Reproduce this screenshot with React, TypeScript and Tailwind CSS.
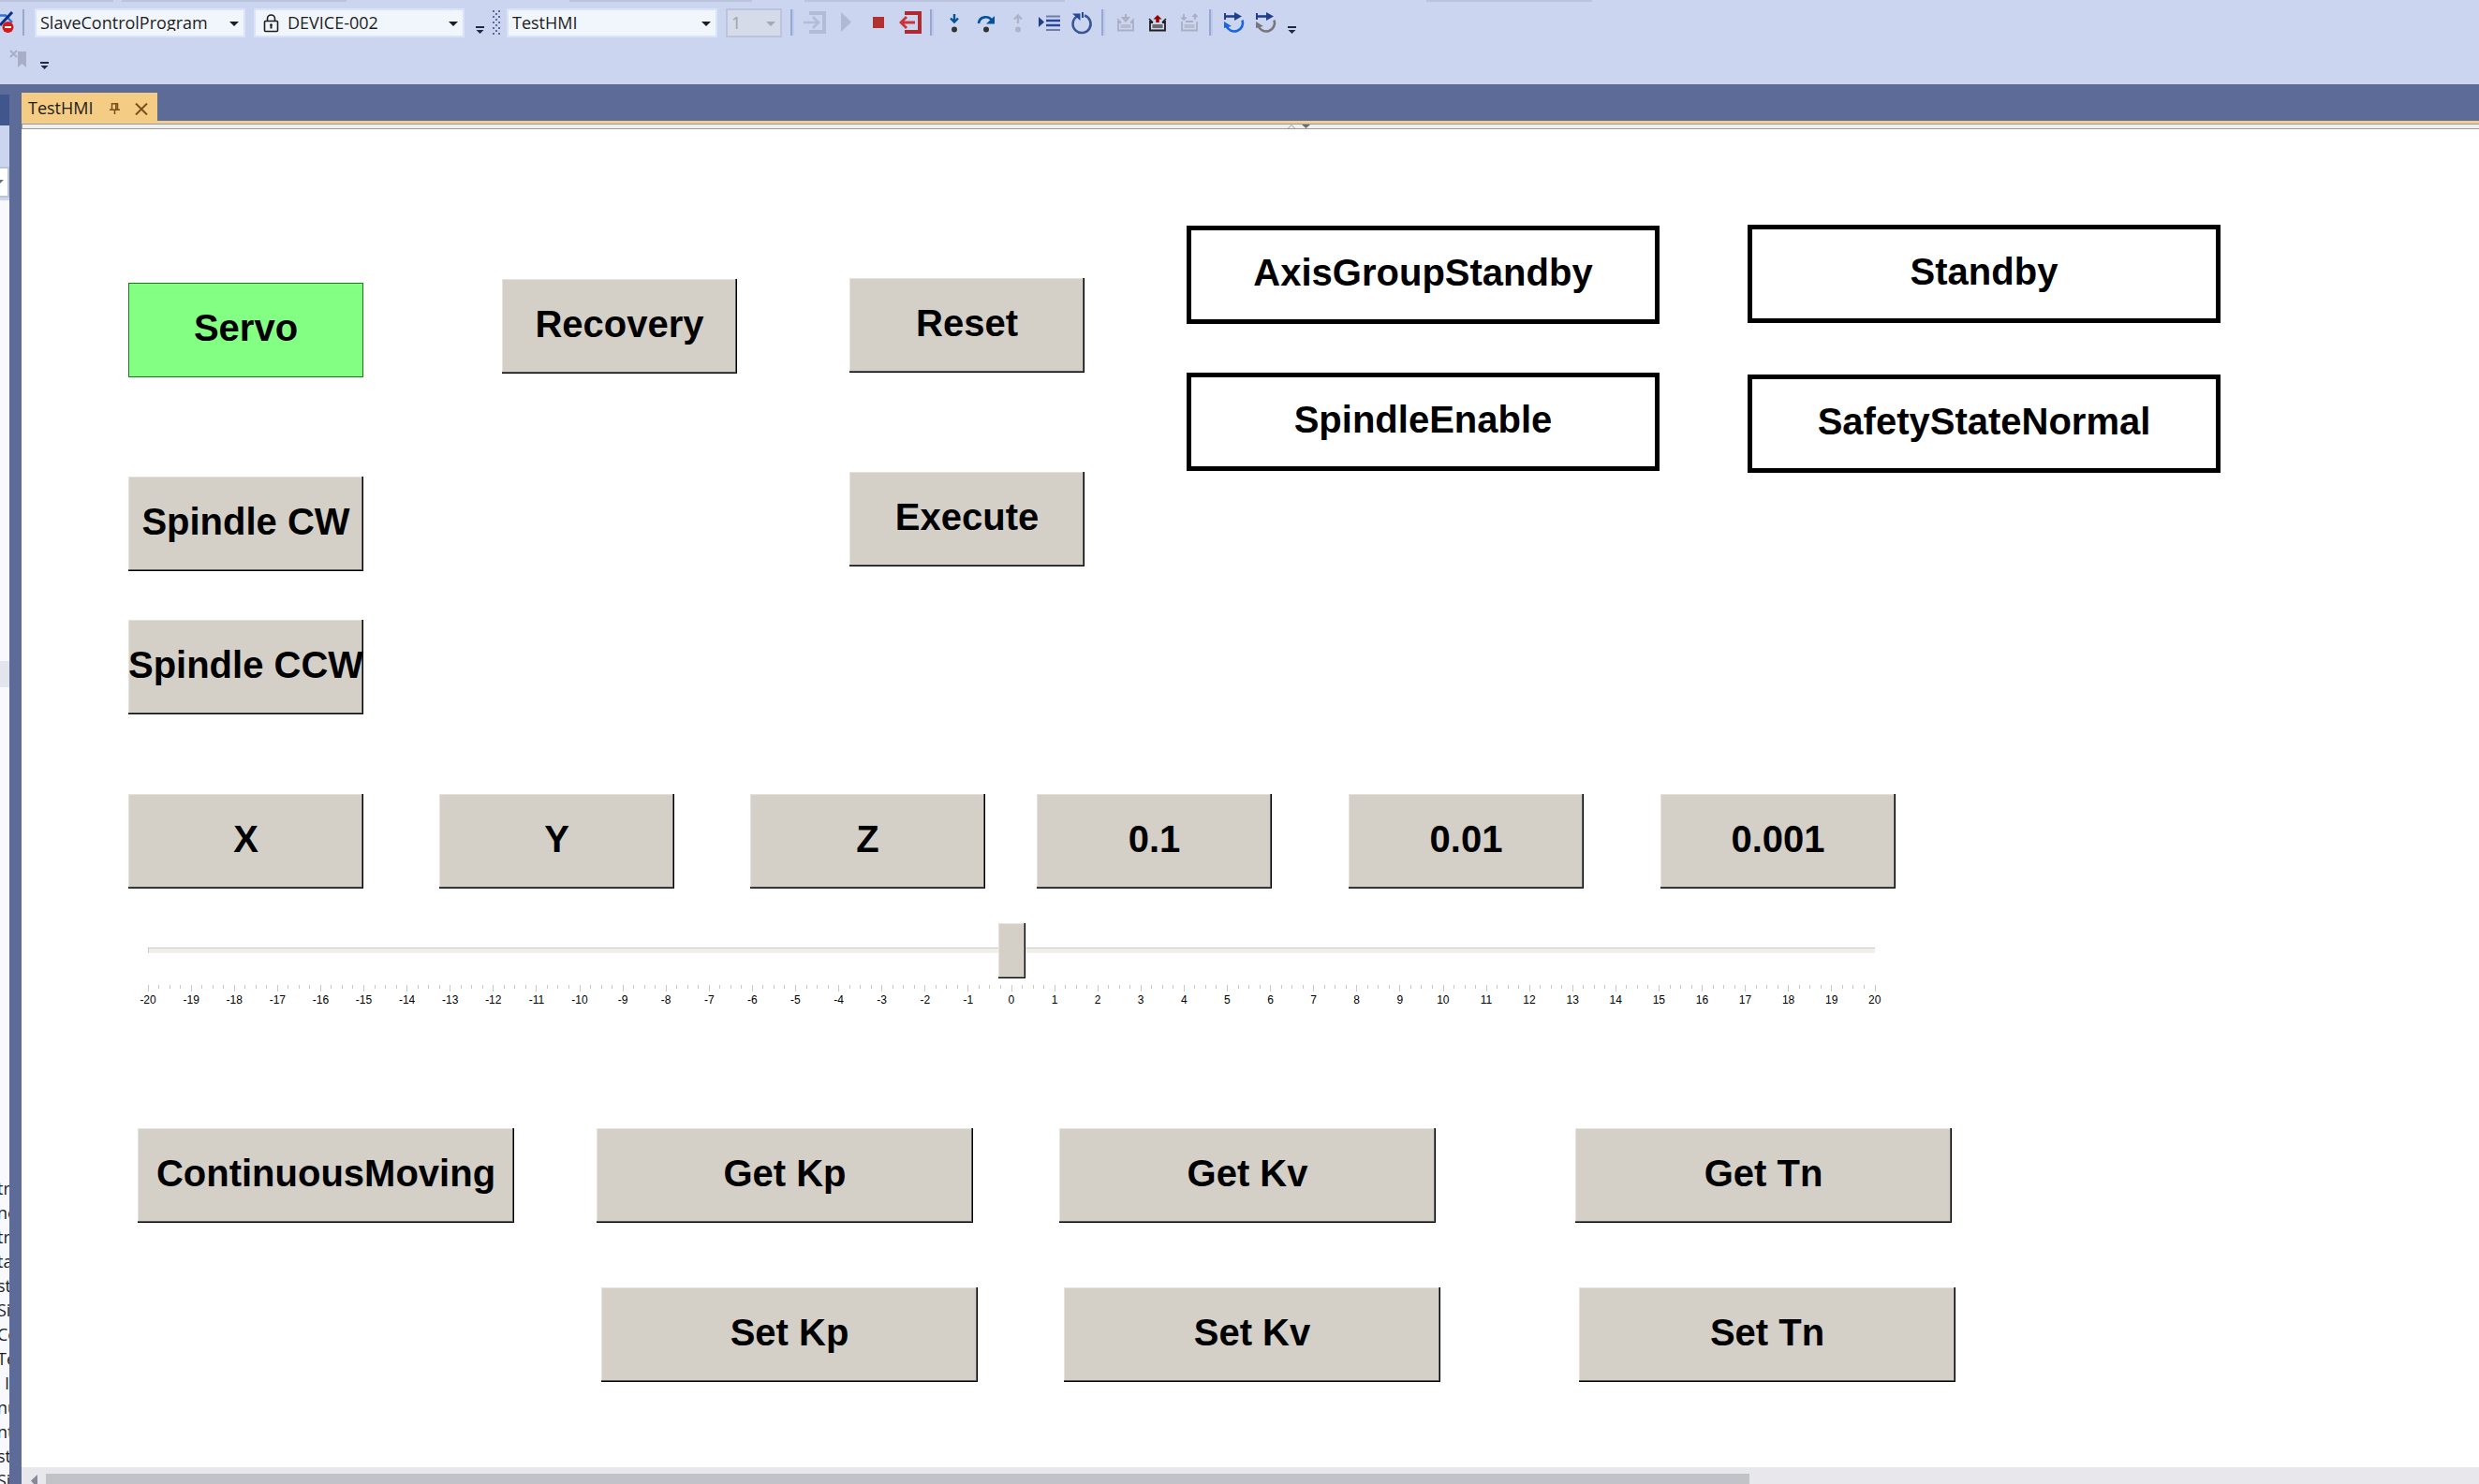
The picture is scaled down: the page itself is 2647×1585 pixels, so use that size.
import React, { useState } from "react";

const BEVEL =
  "bg-[#d4d0c8] shadow-[inset_-1px_-1px_#000,inset_-2px_-2px_#605d56,inset_1px_1px_#e6e3de]";

function HmiButton({ label, wide = false, on = false }: { label: string; wide?: boolean; on?: boolean }) {
  return (
    <button
      type="button"
      className={`flex h-[101px] shrink-0 items-center justify-center whitespace-nowrap pb-1.5 text-[40px] font-bold leading-none text-black ${
        wide ? "w-[402px]" : "w-[251px]"
      } ${on ? "border border-[#1c7a1c] bg-[#83ff83]" : BEVEL}`}
    >
      {label}
    </button>
  );
}

function Indicator({ label }: { label: string }) {
  return (
    <output className="flex h-[105px] w-[505px] shrink-0 items-center justify-center border-[5px] border-black bg-white pb-1.5 text-[40px] font-bold leading-none text-black">
      {label}
    </output>
  );
}

function Combo({ label, value, lock = false }: { label: string; value: string; lock?: boolean }) {
  return (
    <div className="relative flex h-[31px] w-[225px] shrink-0 items-center border-2 border-[#d9e3fb] bg-[#f1f5fc]">
      {lock && (
        <svg className="pointer-events-none absolute left-2 top-1" width="17" height="20" viewBox="0 0 17 20" fill="none" stroke="#1e1e1e" strokeWidth="1.6">
          <rect x="1.5" y="7.5" width="14" height="11" rx="1" />
          <path d="M4.5 7.5V5a4 4 0 0 1 8 0v2.5" />
          <path d="M8.5 11v4.5" strokeWidth="2" />
          <circle cx="8.5" cy="11.5" r="1.2" fill="#1e1e1e" stroke="none" />
        </svg>
      )}
      <select
        aria-label={label}
        className={`h-full w-full appearance-none bg-transparent text-[18px] leading-none text-[#1e1e1e] outline-none ${lock ? "pl-[34px]" : "pl-1"}`}
      >
        <option>{value}</option>
      </select>
      <svg className="pointer-events-none absolute right-[5px] top-[12px]" width="10" height="5" viewBox="0 0 10 5">
        <path d="M0 0h10L5 5z" fill="#1e1e1e" />
      </svg>
    </div>
  );
}

function Separator() {
  return <div className="ml-1 mr-[5px] h-7 w-1 shrink-0 border-l-2 border-[#98a7d0] bg-[#bccaee]" />;
}

function Overflow() {
  return (
    <button type="button" aria-label="Toolbar options" className="h-2 w-[9px] shrink-0">
      <svg width="9" height="8" viewBox="0 0 9 8" fill="#1b2a4a">
        <path d="M0 0h9v2H0zM0.5 4h8L4.5 8z" />
      </svg>
    </button>
  );
}

function Tool({ name, disabled = false, children }: { name: string; disabled?: boolean; children: React.ReactNode }) {
  return (
    <button type="button" aria-label={name} disabled={disabled} className="size-[34px] shrink-0">
      <svg width="34" height="34" viewBox="0 0 34 34" fill="none">
        {children}
      </svg>
    </button>
  );
}

function Tray({ color, fill }: { color: string; fill: string }) {
  return (
    <>
      <path d="M9 15v10.500h16V15M9 17h3M22 17h3" stroke={color} strokeWidth="1.8" />
      <path d="M8 13l4 4M26 13l-4 4" stroke={color} strokeWidth="1.5" />
      <rect x="11.5" y="19" width="11" height="4" fill={fill} />
    </>
  );
}

function CycleIcon({ arc }: { arc: string }) {
  return (
    <>
      <path d="M8 7v7" stroke="#1f3f8a" strokeWidth="2" />
      <path d="M8 10.500h12" stroke="#1f3f8a" strokeWidth="2.6" />
      <path d="M18 6l8 4.500-8 4.500z" fill="#1f3f8a" />
      <path d="M26.500 14.500a9 9 0 1 1-17 6" stroke={arc} strokeWidth="2.6" />
      <path d="M7 23V16l8 5z" fill={arc} />
    </>
  );
}

function Toolbars() {
  return (
    <header className="flex h-[90px] shrink-0 flex-col bg-[#ccd5f0]">
      <div className="flex h-0.5 shrink-0 overflow-hidden">
        <div className="w-[121px] shrink-0 bg-[#bac4dc]" />
        <div className="ml-[9px] w-[240px] shrink-0 bg-[#bac4dc]" />
        <div className="ml-[238px] w-[195px] shrink-0 bg-[#bac4dc]" />
        <div className="ml-[56px] w-[278px] shrink-0 bg-[#bac4dc]" />
        <div className="ml-[386px] w-[177px] shrink-0 bg-[#bac4dc]" />
      </div>
      <div className="mt-[5px] flex h-[34px] shrink-0 items-center">
        <svg width="15" height="34" viewBox="0 0 15 34" fill="none" className="shrink-0">
          <path d="M0 9.500h6L13 17" stroke="#2f6fd8" strokeWidth="2.5" />
          <path d="M0 20L13 6" stroke="#0b2e8a" strokeWidth="3" />
          <circle cx="8.5" cy="22" r="6" fill="#d11a1a" />
          <path d="M5 22h7" stroke="#fff" strokeWidth="2" />
        </svg>
        <div className="ml-[9px] mr-[9px] h-7 w-1 shrink-0 border-l-2 border-[#98a7d0]" />
        <Combo label="Program" value="SlaveControlProgram" />
        <div className="w-[9px] shrink-0" />
        <Combo label="Device" value="DEVICE-002" lock />
        <div className="ml-3 mr-[9px] mt-4 flex shrink-0">
          <Overflow />
        </div>
        <svg width="8" height="26" viewBox="0 0 8 26" className="mr-[7px] shrink-0" fill="#5c6b99">
          {[0, 6, 12, 18, 24].map((y) => (
            <path key={y} d={`M0 ${y}h2v2h-2zM6 ${y}h2v2h-2z`} />
          ))}
          {[3, 9, 15, 21].map((y) => (
            <path key={y} d={`M3 ${y}h2v2h-2z`} />
          ))}
        </svg>
        <Combo label="Screen" value="TestHMI" />
        <div className="relative ml-[9px] mr-[5px] flex h-[31px] w-[60px] shrink-0 items-center border-2 border-[#bac4dc] bg-[#d5dbe8]">
          <select aria-label="Instance" disabled className="h-full w-full appearance-none bg-transparent pl-1 text-[18px] leading-none text-[#a2a4a5] opacity-100">
            <option>1</option>
          </select>
          <svg className="pointer-events-none absolute right-[5px] top-[12px]" width="10" height="5" viewBox="0 0 10 5">
            <path d="M0 0h10L5 5z" fill="#a3a9ba" />
          </svg>
        </div>
        <Separator />
        <Tool name="Login" disabled>
          <path d="M11 5h18v24H11v-4h14V9H11z" fill="#b4bbd4" />
          <path d="M5 17h15M15 11l6 6-6 6" stroke="#b4bbd4" strokeWidth="2.5" />
        </Tool>
        <Tool name="Start" disabled>
          <path d="M11 6l11 10.500L11 27z" fill="#b0b8d2" />
        </Tool>
        <Tool name="Stop">
          <rect x="11" y="11" width="12" height="12" fill="#b13030" />
        </Tool>
        <Tool name="Logout">
          <path d="M11 5h18v24H11v-4h14V9H11z" fill="#ad2c2f" />
          <path d="M22 17H7M13 11l-6 6 6 6" stroke="#cc3236" strokeWidth="2.8" />
        </Tool>
        <Separator />
        <Tool name="Step into">
          <path d="M17 8v8M13 12.500l4 4 4-4" stroke="#00539c" strokeWidth="2.4" />
          <circle cx="17" cy="24.5" r="3" fill="#333" />
        </Tool>
        <Tool name="Step over">
          <path d="M9 18c1-8 11-9 15-2" stroke="#00539c" strokeWidth="2.6" />
          <path d="M26 10v8.500h-9z" fill="#00539c" />
          <circle cx="17" cy="24.5" r="3" fill="#333" />
        </Tool>
        <Tool name="Step out" disabled>
          <path d="M17 18v-8M13 13.500l4-4 4 4" stroke="#adb3c8" strokeWidth="2.4" />
          <circle cx="17" cy="24.5" r="3" fill="#adb3c8" />
        </Tool>
        <Tool name="Show next statement">
          <path d="M5 11l6 5.500L5 22z" fill="#1f3f8a" />
          <path d="M13 10.500h15M13 25h15" stroke="#6d7ea9" strokeWidth="2" />
          <path d="M13 15h15M13 20h15" stroke="#27479a" strokeWidth="2.4" />
        </Tool>
        <Tool name="Restart">
          <path d="M20 9.500a9.500 9.500 0 1 1-8 1" stroke="#3a5699" strokeWidth="2.6" />
          <path d="M7 7.500h8.500V15z" fill="#27479a" />
          <path d="M18 6v6" stroke="#27479a" strokeWidth="2" />
        </Tool>
        <Separator />
        <Tool name="Load" disabled>
          <Tray color="#a9afc4" fill="#b7bdd0" />
          <path d="M17 8v5M14 12l3 3.500 3-3.500z" stroke="#a9afc4" strokeWidth="2" />
        </Tool>
        <Tool name="Save">
          <Tray color="#1e1e1e" fill="#6b6b6b" />
          <path d="M17 17v-6" stroke="#920000" strokeWidth="3.5" />
          <path d="M12.500 13.500h9L17 9z" fill="#920000" />
        </Tool>
        <Tool name="Compare" disabled>
          <path d="M9 16v9.500h16V16" stroke="#a9afc4" strokeWidth="1.8" />
          <rect x="11.5" y="19" width="11" height="4" fill="#b7bdd0" />
          <path d="M11 8v6M8.500 11.500l2.500 2.500 2.500-2.500M23 14V9M20.500 11L23 8.500l2.500 2.500M13 16h8" stroke="#a9afc4" strokeWidth="1.8" />
        </Tool>
        <Separator />
        <Tool name="Single cycle">
          <CycleIcon arc="#1766e0" />
        </Tool>
        <Tool name="Flow control">
          <CycleIcon arc="#76777c" />
        </Tool>
        <div className="ml-[7px] mt-4 flex shrink-0">
          <Overflow />
        </div>
      </div>
      <div className="mt-3 flex h-6 shrink-0 items-end pl-[10px]">
        <svg width="18" height="20" viewBox="0 0 18 20" className="mb-1" fill="none">
          <path d="M9 2h9v17l-4.500-4L9 19z" fill="#a8aec6" />
          <path d="M1 1l7 7M8 1L1 8" stroke="#a8aec6" strokeWidth="2" />
        </svg>
        <div className="mb-[3px] ml-[15px] flex">
          <Overflow />
        </div>
      </div>
    </header>
  );
}

const TREE = ["tr", "ne", "tr", "ta", "st", "Si", "Co", "Te", "I", "nu", "nt", "st", "Si"];

function SidePanel() {
  return (
    <aside className="mt-[11px] flex w-[10px] shrink-0 flex-col overflow-hidden bg-[#f8f9ff] text-[18px] text-[#1e1e1e]">
      <div className="h-[33px] shrink-0 bg-[#40568d]" />
      <div className="flex h-20 shrink-0 items-end bg-[#ccd5f0] pb-[3px]">
        <div className="flex h-[33px] w-[10px] items-center border-y-2 border-r-2 border-[#bac4dc] bg-white">
          <svg width="4" height="5" viewBox="0 0 4 5">
            <path d="M0 0h4L0 4z" fill="#717171" />
          </svg>
        </div>
      </div>
      <div className="mt-[492px] h-7 shrink-0 bg-[#e3e5ee]" />
      <ul className="-ml-[3px] mt-auto h-[329px] shrink-0 overflow-hidden">
        {TREE.map((t, i) => (
          <li key={i} className={`h-[26px] whitespace-nowrap leading-[26px] ${t === "I" ? "pl-2" : ""}`}>
            {t}
          </li>
        ))}
      </ul>
    </aside>
  );
}

const UNITS = Array.from({ length: 41 }, (_, i) => i - 20);
const TICKS = Array.from({ length: 161 }, (_, i) => i);

function Slider() {
  const [value, setValue] = useState(0);
  return (
    <div className="ml-[112px] mt-[37px] w-[1890px]">
      <div className="grid items-center px-[9px]">
        <div className="col-start-1 row-start-1 mx-[14px] mb-0.5 h-[6px] border-l border-t border-[#cfccc4] bg-[#f1efeb]" />
        <input
          type="range"
          aria-label="Velocity"
          min={-20}
          max={20}
          step={1}
          value={value}
          onChange={(e) => setValue(Number(e.target.value))}
          className="col-start-1 row-start-1 h-[59px] w-full appearance-none bg-transparent [&::-webkit-slider-thumb]:h-[59px] [&::-webkit-slider-thumb]:w-[29px] [&::-webkit-slider-thumb]:appearance-none [&::-webkit-slider-thumb]:bg-[#d4d0c8] [&::-webkit-slider-thumb]:shadow-[inset_-1px_-1px_#000,inset_-2px_-2px_#807c72,inset_1px_1px_#e6e3de]"
        />
      </div>
      <div className="mt-[7px] px-[23px]">
        <svg className="block h-[7px] w-full overflow-visible" stroke="#cbc9c3" strokeWidth="1" shapeRendering="crispEdges">
          {TICKS.map((i) => (
            <line key={i} x1={`${i / 1.6}%`} x2={`${i / 1.6}%`} y1="0" y2={i % 4 === 0 ? 7 : 4} />
          ))}
        </svg>
      </div>
      <div className="mt-px flex text-center text-[12px] leading-4 text-black">
        {UNITS.map((n) => (
          <span key={n} className="flex-1 basis-0">
            {n}
          </span>
        ))}
      </div>
    </div>
  );
}

function HmiCanvas() {
  return (
    <section className="flex-1 overflow-hidden bg-white pt-[102px] font-['Liberation_Sans',Arial,sans-serif]">
      <div className="flex items-start pl-[114px]">
        <div className="mt-[62px] flex flex-col">
          <HmiButton label="Servo" on />
          <div className="mt-[106px] flex flex-col gap-[52px]">
            <HmiButton label="Spindle CW" />
            <HmiButton label="Spindle CCW" />
          </div>
        </div>
        <div className="ml-[148px] mt-[58px]">
          <HmiButton label="Recovery" />
        </div>
        <div className="ml-[120px] mt-[57px] flex flex-col gap-[106px]">
          <HmiButton label="Reset" />
          <HmiButton label="Execute" />
        </div>
        <div className="ml-[109px] mt-px flex flex-col gap-[52px]">
          <Indicator label="AxisGroupStandby" />
          <Indicator label="SpindleEnable" />
        </div>
        <div className="ml-[94px] flex flex-col gap-[55px]">
          <Indicator label="Standby" />
          <Indicator label="SafetyStateNormal" />
        </div>
      </div>

      <div className="mt-[85px] flex gap-[55px] pl-[114px]">
        <div className="flex gap-[81px]">
          <HmiButton label="X" />
          <HmiButton label="Y" />
          <HmiButton label="Z" />
        </div>
        <div className="flex gap-[82px]">
          <HmiButton label="0.1" />
          <HmiButton label="0.01" />
          <HmiButton label="0.001" />
        </div>
      </div>

      <Slider />

      <div className="mt-[129px] flex pl-[124px]">
        <div className="mr-[88px]">
          <HmiButton label="ContinuousMoving" wide />
        </div>
        <div className="mr-[149px] flex gap-[92px]">
          <HmiButton label="Get Kp" wide />
          <HmiButton label="Get Kv" wide />
        </div>
        <HmiButton label="Get Tn" wide />
      </div>
      <div className="mt-[69px] flex pl-[619px]">
        <div className="mr-[148px] flex gap-[92px]">
          <HmiButton label="Set Kp" wide />
          <HmiButton label="Set Kv" wide />
        </div>
        <HmiButton label="Set Tn" wide />
      </div>
    </section>
  );
}

export default function App() {
  return (
    <div className="flex h-screen flex-col overflow-hidden bg-[#5d6b99] font-['Open_Sans','Noto_Sans',sans-serif]">
      <Toolbars />
      <div className="flex min-h-0 flex-1">
        <SidePanel />
        <main className="ml-[13px] flex min-w-0 flex-1 flex-col">
          <div className="flex h-[39px] shrink-0 items-end">
            <div className="flex h-[30px] w-[145px] items-center bg-[#f5cc84] pl-[7px] pr-[10px] pt-1 text-[18px] leading-none text-[#1e1e1e]">
              <span className="flex-1 pb-0.5">TestHMI</span>
              <button type="button" aria-label="Pin tab" className="mr-4">
                <svg width="11" height="12" viewBox="0 0 11 12" fill="none" stroke="#7a4f1a" strokeWidth="1.5">
                  <path d="M2.500 7V0.800h6V7M6.800 1v6M0 7.200h11M5.500 7v5" />
                </svg>
              </button>
              <button type="button" aria-label="Close tab">
                <svg width="14" height="13" viewBox="0 0 14 13" fill="none" stroke="#7a4f1a" strokeWidth="2">
                  <path d="M1 0.500l12 12M13 0.500l-12 12" />
                </svg>
              </button>
            </div>
          </div>
          <div className="h-[3px] shrink-0 bg-[#f1cd90]" />
          <div className="flex h-[6px] shrink-0 border-y border-l border-[#9a9a9a] bg-[#f0f0f0] pl-[1351px]">
            <svg width="24" height="4" viewBox="0 0 24 4" fill="none">
              <path d="M0.500 4L4 0.500 7.500 4" stroke="#9a9a9a" />
              <path d="M15 0h9l-4.500 4z" fill="#6b6b6b" />
            </svg>
          </div>
          <HmiCanvas />
          <div className="flex h-[18px] shrink-0 items-end bg-[#e8e8ec] pl-[10px]">
            <svg width="7" height="10" viewBox="0 0 7 10" className="shrink-0">
              <path d="M7 0v10H3L0 6.500z" fill="#868999" />
            </svg>
            <div className="ml-[9px] flex h-[11px] flex-1">
              <div className="w-[70%] bg-[#c2c3c9]" />
            </div>
          </div>
        </main>
      </div>
    </div>
  );
}
